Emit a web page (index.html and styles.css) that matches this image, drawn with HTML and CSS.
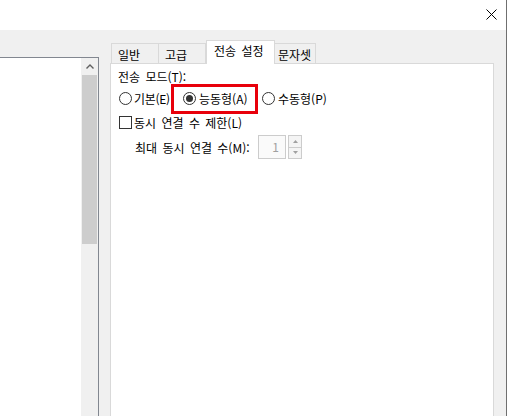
FILE: index.html
```html
<!DOCTYPE html>
<html lang="ko">
<head>
    <meta charset="UTF-8">
    <meta name="viewport" content="width=device-width, initial-scale=1.0">
    <title>사이트 관리자</title>
    <link rel="stylesheet" href="styles.css">
</head>
<body>
    <div class="window">
        <div class="titlebar">
            <button class="close" title="닫기">
                <svg width="11" height="11" viewBox="0 0 11 11">
                    <path d="M0.5 0.5 L10.5 10.5 M10.5 0.5 L0.5 10.5" stroke="#000" stroke-width="1" fill="none"/>
                </svg>
            </button>
        </div>
        <div class="client">
            <div class="site-list">
                <div class="scrollbar">
                    <div class="scroll-up">
                        <svg width="8" height="5" viewBox="0 0 8 5">
                            <path d="M0.5 4.5 L4 1 L7.5 4.5" stroke="#606060" stroke-width="1.4" fill="none"/>
                        </svg>
                    </div>
                    <div class="scroll-thumb"></div>
                </div>
            </div>

            <div class="tabs">
                <div class="tab-strip">
                    <div class="tab first">일반</div>
                    <div class="tab second">고급</div>
                    <div class="tab active">전송 설정</div>
                    <div class="tab last">문자셋</div>
                </div>
                <div class="tab-panel">
                    <div class="group-label">전송 모드(T):</div>
                    <div class="radio-row">
                        <label class="radio basic">
                            <span class="radio-dot"></span><span>기본(E)</span>
                        </label>
                        <label class="radio highlighted">
                            <span class="radio-dot checked"></span><span>능동형(A)</span>
                        </label>
                        <label class="radio passive">
                            <span class="radio-dot"></span><span>수동형(P)</span>
                        </label>
                    </div>
                    <label class="check-row">
                        <span class="check-box"></span><span>동시 연결 수 제한(L)</span>
                    </label>
                    <div class="limit-row">
                        <span class="limit-label">최대 동시 연결 수(M):</span>
                        <div class="spin-input">1</div>
                        <div class="spin-buttons">
                            <div class="spin-btn">
                                <svg width="5" height="3" viewBox="0 0 5 3"><path d="M0 3 L2.5 0 L5 3 Z" fill="#a0a0a0"/></svg>
                            </div>
                            <div class="spin-btn">
                                <svg width="5" height="3" viewBox="0 0 5 3"><path d="M0 0 L2.5 3 L5 0 Z" fill="#a0a0a0"/></svg>
                            </div>
                        </div>
                    </div>
                </div>
            </div>
        </div>
    </div>
</body>
</html>
```

FILE: styles.css
```css
body {
    margin: 0;
    font-family: "Noto Sans CJK KR", "Malgun Gothic", sans-serif;
    font-size: 12px;
    word-spacing: 2px;
    color: #000;
    background: #f0f0f0;
}

.window {
    width: 507px;
    height: 416px;
    box-sizing: border-box;
    border-right: 1px solid #6f6f6f;
    display: flex;
    flex-direction: column;
    overflow: hidden;
}

.titlebar {
    height: 30px;
    background: white;
    display: flex;
    justify-content: flex-end;
    align-items: flex-start;
    flex-shrink: 0;
}

.close {
    width: 30px;
    height: 30px;
    padding: 9px 0 0 0;
    border: none;
    background: transparent;
    display: flex;
    justify-content: center;
    align-items: flex-start;
    box-sizing: border-box;
}

.client {
    flex: 1;
    display: flex;
    background: #f0f0f0;
}

.site-list {
    width: 99px;
    margin-top: 27px;
    box-sizing: border-box;
    background: white;
    border-top: 1px solid #828790;
    border-right: 1px solid #828790;
    display: flex;
    justify-content: flex-end;
}

.scrollbar {
    width: 17px;
    background: #f0f0f0;
    display: flex;
    flex-direction: column;
    align-items: center;
}

.scroll-up {
    height: 17px;
    width: 17px;
    display: flex;
    justify-content: center;
    align-items: center;
}

.scroll-thumb {
    width: 15px;
    height: 169px;
    background: #cdcdcd;
}

.tabs {
    width: 384px;
    margin-left: 11px;
    margin-top: 10px;
    display: flex;
    flex-direction: column;
}

.tab-strip {
    display: flex;
    align-items: flex-end;
    padding-left: 1px;
    height: 24px;
    margin-bottom: -1px;
}

.tab {
    height: 21px;
    box-sizing: border-box;
    border: 1px solid #d9d9d9;
    border-bottom: none;
    border-left: none;
    background: #f0f0f0;
    display: flex;
    align-items: center;
    line-height: 1;
    padding-top: 1px;
}

.tab.first {
    width: 48px;
    padding-left: 6px;
    border-left: 1px solid #d9d9d9;
}

.tab.second {
    width: 47px;
    padding-left: 6px;
}

.tab.active {
    width: 69px;
    height: 24px;
    padding-left: 7px;
    border-left: 1px solid #d9d9d9;
    background: white;
    position: relative;
    z-index: 1;
    padding-top: 0;
    padding-bottom: 3px;
}

.tab.last {
    width: 41px;
    padding-left: 3px;
}

.tab-panel {
    flex: 1;
    background: white;
    border: 1px solid #d9d9d9;
    border-bottom: none;
    padding: 0 7px;
}

.group-label {
    height: 20px;
    line-height: 20px;
    padding-top: 3px;
}

.radio-row {
    height: 23px;
    display: flex;
    align-items: center;
}

.radio {
    display: flex;
    align-items: center;
    height: 20px;
    box-sizing: border-box;
    gap: 2px;
    white-space: nowrap;
    flex-shrink: 0;
}

.radio-dot {
    width: 13px;
    height: 13px;
    box-sizing: border-box;
    border: 1px solid #333;
    border-radius: 50%;
    background: white;
    display: flex;
    justify-content: center;
    align-items: center;
    flex-shrink: 0;
}

.radio-dot.checked::after {
    content: "";
    width: 7px;
    height: 7px;
    border-radius: 50%;
    background: #333;
}

.radio.basic {
    width: 52px;
    margin-left: 1px;
    letter-spacing: -0.3px;
}

.radio.highlighted {
    width: 87px;
    height: 30px;
    border: 3px solid #e8000b;
    padding-left: 9px;
    gap: 3px;
}

.radio.passive {
    margin-left: 4px;
    gap: 3px;
}

.check-row {
    height: 25px;
    display: flex;
    align-items: center;
    gap: 2px;
    white-space: nowrap;
}

.check-box {
    width: 13px;
    height: 13px;
    box-sizing: border-box;
    border: 1px solid #333;
    background: white;
    margin-left: 1px;
}

.limit-row {
    height: 24px;
    display: flex;
    align-items: center;
    padding-left: 17px;
}

.limit-label {
    width: 123px;
    white-space: nowrap;
}

.spin-input {
    width: 28px;
    height: 24px;
    box-sizing: border-box;
    border: 1px solid #cccccc;
    background: #fafafa;
    color: #a0a0a0;
    text-align: right;
    padding-right: 6px;
    line-height: 22px;
}

.spin-buttons {
    width: 14px;
    height: 24px;
    margin-left: 2px;
    display: flex;
    flex-direction: column;
}

.spin-btn {
    flex: 1;
    border: 1px solid #cccccc;
    background: #f4f4f4;
    display: flex;
    justify-content: center;
    align-items: center;
}

.spin-btn + .spin-btn {
    border-top: none;
}
```
